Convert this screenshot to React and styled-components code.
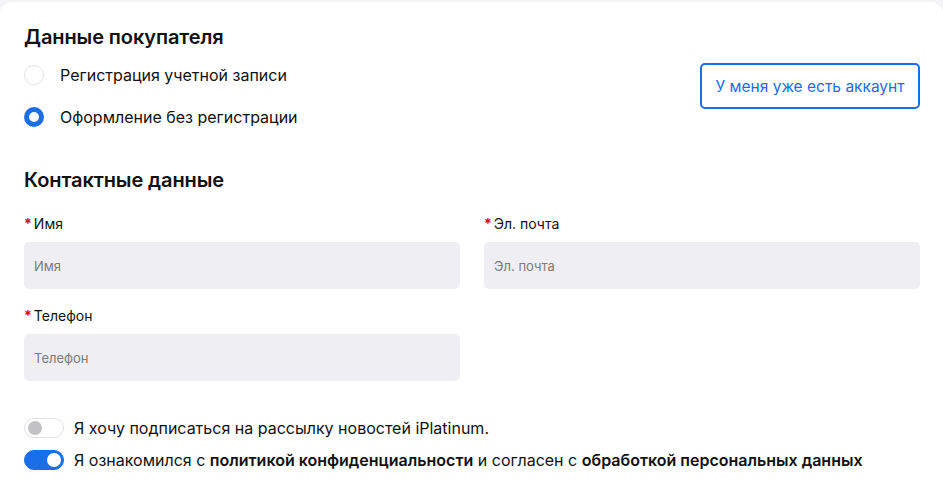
import React from "react";
import styled, { createGlobalStyle } from "styled-components";

const Global = createGlobalStyle`
  html, body { margin: 0; padding: 0; background: #f4f4f6; }
  body { font-family: Inter, "Noto Sans", sans-serif; color: #111; }
  * { box-sizing: border-box; }
`;

const BLUE = "#1a6ee8";

const Card = styled.div`
  margin-top: 2px;
  background: #fff;
  border-radius: 12px 12px 0 0;
  padding: 23px 23px 30px 24px;
  min-height: 498px;
`;

const Title = styled.h2`
  margin: 0;
  font-size: 20px;
  font-weight: 600;
  line-height: 24px;
  letter-spacing: -0.1px;
`;

const BuyerRow = styled.div`
  display: flex;
  justify-content: space-between;
  align-items: flex-start;
`;

const RadioList = styled.div`
  display: flex;
  flex-direction: column;
  gap: 22px;
  margin-top: 16px;
`;

const RadioItem = styled.label`
  display: flex;
  align-items: center;
  gap: 16px;
  font-size: 16px;
  line-height: 20px;
  color: #111;
`;

const RadioDot = styled.span`
  width: 20px;
  height: 20px;
  border-radius: 50%;
  flex: none;
  border: ${(p) => (p.$checked ? `5px solid ${BLUE}` : "1px solid #e2e2e6")};
  background: #fff;
`;

const AccountButton = styled.button`
  margin-top: 38px;
  width: 220px;
  height: 46px;
  border: 2px solid ${BLUE};
  border-radius: 5px;
  background: #fff;
  color: ${BLUE};
  font-family: inherit;
  font-size: 15.5px;
`;

const Section = styled.div`
  margin-top: 41px;
`;

const Grid = styled.div`
  display: grid;
  grid-template-columns: 1fr 1fr;
  column-gap: 24px;
  row-gap: 18px;
  margin-top: 23px;
`;

const Field = styled.div`
  display: flex;
  flex-direction: column;
  gap: 9px;
`;

const Label = styled.label`
  font-size: 14px;
  line-height: 18px;
  color: #111;
  &::before {
    content: "*";
    color: #e4000f;
    font-weight: 700;
    margin-right: 2px;
  }
`;

const Input = styled.input`
  height: 47px;
  border: none;
  border-radius: 5px;
  background: #efeff3;
  padding: 0 10px;
  font-family: inherit;
  font-size: 13px;
  color: #111;
  outline: none;
  &::placeholder { color: #7a7a80; }
`;

const Toggles = styled.div`
  margin-top: 37px;
  display: flex;
  flex-direction: column;
  gap: 12px;
`;

const ToggleRow = styled.div`
  display: flex;
  align-items: center;
  gap: 10px;
  font-size: 16px;
  line-height: 20px;
  color: #111;
  b { font-weight: 600; }
`;

const Switch = styled.span`
  position: relative;
  width: 40px;
  height: 20px;
  flex: none;
  border-radius: 10px;
  background: ${(p) => (p.$on ? BLUE : "#fff")};
  border: 1px solid ${(p) => (p.$on ? BLUE : "#e2e2e6")};
  &::after {
    content: "";
    position: absolute;
    top: 2px;
    left: ${(p) => (p.$on ? "22px" : "3px")};
    width: 14px;
    height: 14px;
    border-radius: 50%;
    background: ${(p) => (p.$on ? "#fff" : "#c2c2c4")};
  }
`;

export default function App() {
  return (
    <>
      <Global />
      <Card>
        <BuyerRow>
          <div>
            <Title>Данные покупателя</Title>
            <RadioList>
              <RadioItem>
                <RadioDot />
                Регистрация учетной записи
              </RadioItem>
              <RadioItem>
                <RadioDot $checked />
                Оформление без регистрации
              </RadioItem>
            </RadioList>
          </div>
          <AccountButton>У меня уже есть аккаунт</AccountButton>
        </BuyerRow>
        <Section>
          <Title>Контактные данные</Title>
          <Grid>
            <Field>
              <Label>Имя</Label>
              <Input placeholder="Имя" />
            </Field>
            <Field>
              <Label>Эл. почта</Label>
              <Input placeholder="Эл. почта" />
            </Field>
            <Field>
              <Label>Телефон</Label>
              <Input placeholder="Телефон" />
            </Field>
          </Grid>
        </Section>
        <Toggles>
          <ToggleRow>
            <Switch />
            Я хочу подписаться на рассылку новостей iPlatinum.
          </ToggleRow>
          <ToggleRow>
            <Switch $on />
            <span>
              Я ознакомился с <b>политикой конфиденциальности</b> и согласен с{" "}
              <b>обработкой персональных данных</b>
            </span>
          </ToggleRow>
        </Toggles>
      </Card>
    </>
  );
}
